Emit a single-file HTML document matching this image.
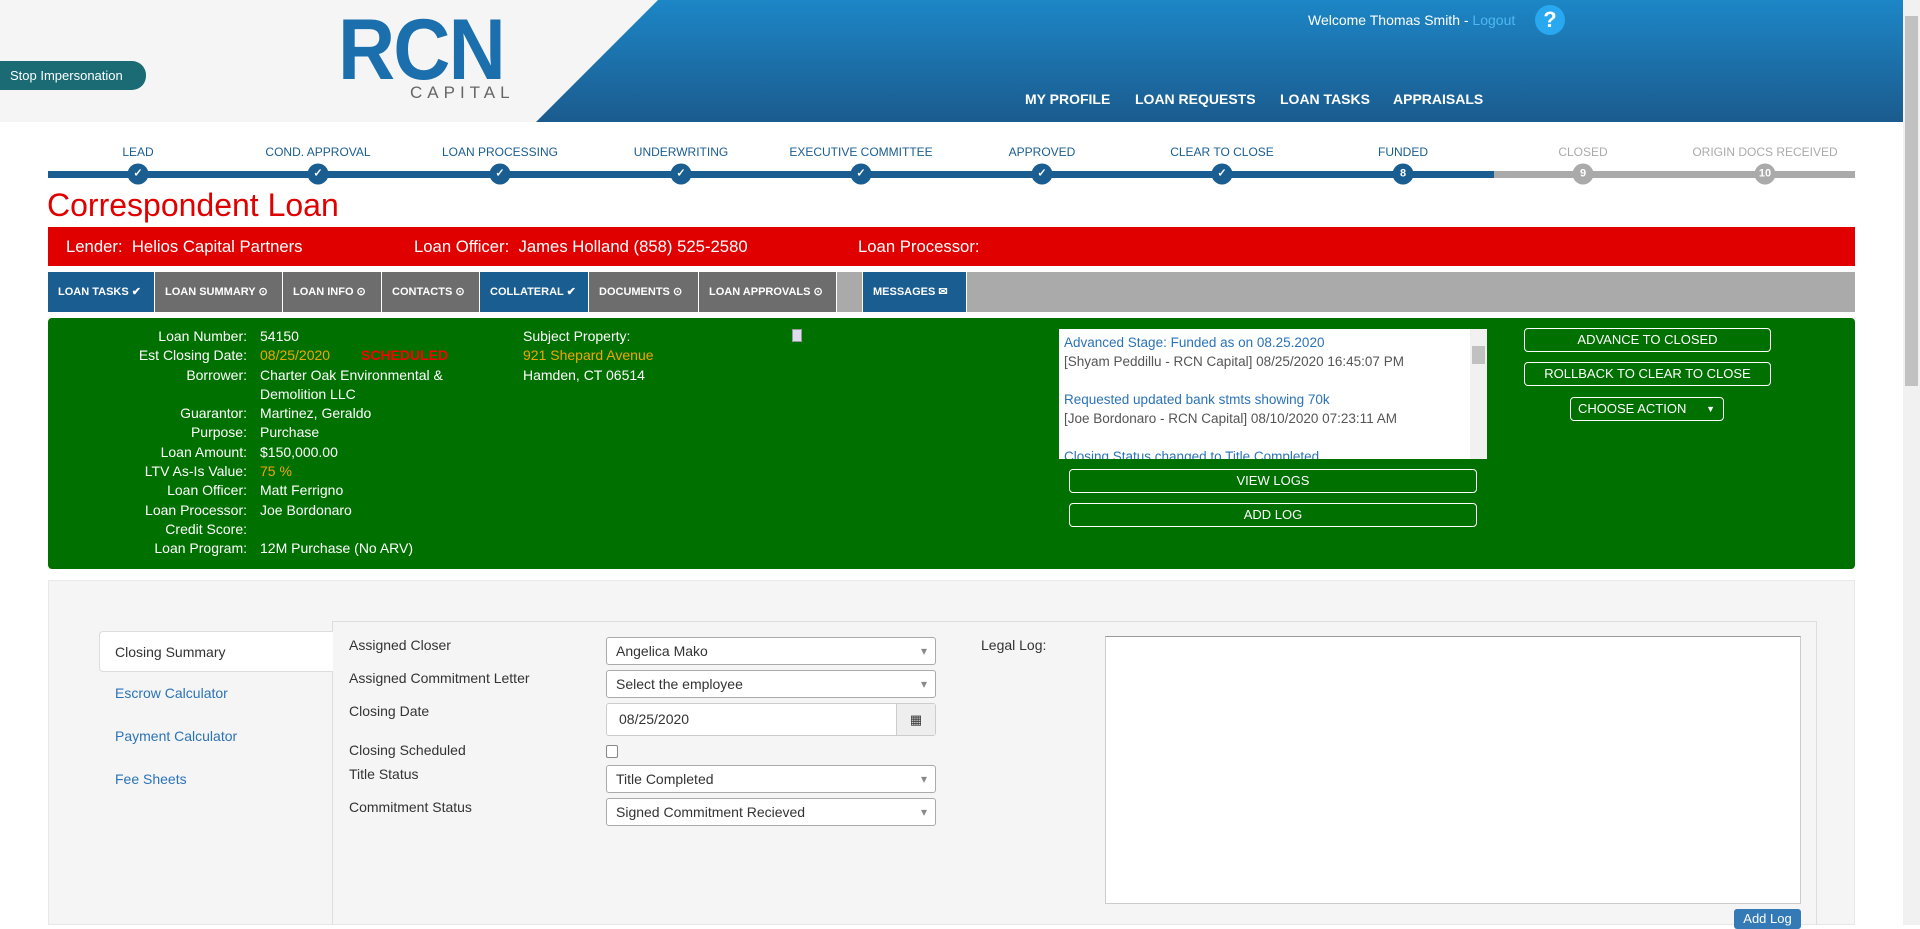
<!DOCTYPE html>
<html><head><meta charset="utf-8">
<style>
*{box-sizing:border-box;margin:0;padding:0}
body{width:1920px;height:925px;overflow:hidden;background:#fff;font-family:"Liberation Sans",Arial,sans-serif;position:relative;color:#333}
.a{position:absolute;white-space:nowrap}
.hdr{position:absolute;left:0;top:0;width:1903px;height:122px;background:#f5f5f5}
.scroll{position:absolute;left:1903px;top:0;width:17px;height:925px;background:#f1f1f1}
.lbl{font-size:12px;color:#1a5d91;text-align:center;transform:translateX(-50%)}
.circ{position:absolute;width:21px;height:21px;border-radius:50%;background:#1a5d91;color:#fff;font-size:11px;font-weight:bold;text-align:center;line-height:21px;transform:translate(-50%,-50%)}
.tab{position:absolute;top:272px;height:40px;color:#fff;font-size:11px;font-weight:bold;line-height:40px;padding-left:10px}
.g{background:#6d6d6d}.b{background:#1a5d91}
.gr{font-size:14px;color:#fff;line-height:19.3px}
.btn{position:absolute;border:1px solid #fff;border-radius:4px;color:#fff;font-size:13px;text-align:center}
.sel{position:absolute;left:606px;width:330px;height:28px;background:#fff;border:1px solid #aaa;border-radius:3px;font-size:14px;line-height:26px;padding-left:9px;color:#333}
.sel:after{content:"▾";position:absolute;right:8px;top:0;color:#888;font-size:12px}
.fl{position:absolute;left:349px;font-size:14px;color:#333}
.nav{position:absolute;top:91px;font-size:14px;font-weight:bold;color:#fff;white-space:nowrap}
</style></head><body>
<div class="hdr"></div>
<svg class="a" style="left:0;top:0" width="1903" height="122"><defs><linearGradient id="bg" x1="0" y1="0" x2="0" y2="1"><stop offset="0" stop-color="#1c86c6"/><stop offset="1" stop-color="#1b5b8e"/></linearGradient></defs><polygon points="658,0 1903,0 1903,122 536,122" fill="url(#bg)"/></svg>
<div class="a" style="left:0;top:61px;width:146px;height:29px;background:#1a6b73;border-radius:0 14px 14px 0;color:#fff;font-size:13px;line-height:29px;padding-left:10px">Stop Impersonation</div>
<div class="a" style="left:338px;top:8px;font-size:86px;font-weight:bold;color:#1c6fad;letter-spacing:-2px;line-height:84px;transform:scaleX(0.92);transform-origin:left">RCN</div>
<div class="a" style="left:410px;top:83px;font-size:17px;color:#666;letter-spacing:5px">CAPITAL</div>
<div class="a" style="left:1308px;top:12px;font-size:14px;color:#fff">Welcome Thomas Smith - <span style="color:#4fb8f0">Logout</span></div>
<div class="a" style="left:1535px;top:5px;width:30px;height:30px;border-radius:50%;background:#29a8f0;color:#fff;font-size:22px;font-weight:bold;text-align:center;line-height:30px">?</div>
<div class="nav" style="left:1025px">MY PROFILE</div>
<div class="nav" style="left:1135px">LOAN REQUESTS</div>
<div class="nav" style="left:1280px">LOAN TASKS</div>
<div class="nav" style="left:1393px">APPRAISALS</div>
<div class="scroll"><div style="position:absolute;left:2px;top:16px;width:13px;height:370px;background:#c1c1c1"></div></div>

<div class="a" style="left:48px;top:171px;width:1446px;height:7px;background:#1a5d91"></div>
<div class="a" style="left:1494px;top:171px;width:361px;height:7px;background:#aaa"></div>
<div class="a lbl" style="left:138px;top:145px">LEAD</div>
<div class="a lbl" style="left:318px;top:145px">COND. APPROVAL</div>
<div class="a lbl" style="left:500px;top:145px">LOAN PROCESSING</div>
<div class="a lbl" style="left:681px;top:145px">UNDERWRITING</div>
<div class="a lbl" style="left:861px;top:145px">EXECUTIVE COMMITTEE</div>
<div class="a lbl" style="left:1042px;top:145px">APPROVED</div>
<div class="a lbl" style="left:1222px;top:145px">CLEAR TO CLOSE</div>
<div class="a lbl" style="left:1403px;top:145px">FUNDED</div>
<div class="a lbl" style="left:1583px;top:145px;color:#aaa">CLOSED</div>
<div class="a lbl" style="left:1765px;top:145px;color:#aaa">ORIGIN DOCS RECEIVED</div>
<div class="circ" style="left:138px;top:174px">✓</div><div class="circ" style="left:318px;top:174px">✓</div><div class="circ" style="left:500px;top:174px">✓</div><div class="circ" style="left:681px;top:174px">✓</div><div class="circ" style="left:861px;top:174px">✓</div><div class="circ" style="left:1042px;top:174px">✓</div><div class="circ" style="left:1222px;top:174px">✓</div><div class="circ" style="left:1403px;top:174px">8</div><div class="circ" style="left:1583px;top:174px;background:#aaa">9</div><div class="circ" style="left:1765px;top:174px;background:#aaa">10</div>

<div class="a" style="left:47px;top:187px;font-size:32px;color:#e00000">Correspondent Loan</div>
<div class="a" style="left:48px;top:227px;width:1807px;height:39px;background:#e00000;color:#fff;font-size:16.7px;line-height:39px">
<span class="a" style="left:18px">Lender:&nbsp; Helios Capital Partners</span><span class="a" style="left:366px">Loan Officer:&nbsp; James Holland (858) 525-2580</span><span class="a" style="left:810px">Loan Processor:</span></div>

<div class="tab b" style="left:48px;width:106px">LOAN TASKS ✔</div>
<div class="tab g" style="left:155px;width:127px">LOAN SUMMARY ⊙</div>
<div class="tab g" style="left:283px;width:98px">LOAN INFO ⊙</div>
<div class="tab g" style="left:382px;width:97px">CONTACTS ⊙</div>
<div class="tab b" style="left:480px;width:108px">COLLATERAL ✔</div>
<div class="tab g" style="left:589px;width:109px">DOCUMENTS ⊙</div>
<div class="tab g" style="left:699px;width:137px">LOAN APPROVALS ⊙</div>
<div class="tab" style="left:837px;width:25px;background:#aaa"></div>
<div class="tab b" style="left:863px;width:103px">MESSAGES ✉</div>
<div class="tab" style="left:967px;width:888px;background:#aaa"></div>

<div class="a" style="left:48px;top:318px;width:1807px;height:251px;background:#007000;border-radius:4px"></div>
<div class="a gr" style="left:60px;top:327px;width:187px;text-align:right">Loan Number:<br>Est Closing Date:<br>Borrower:<br><br>Guarantor:<br>Purpose:<br>Loan Amount:<br>LTV As-Is Value:<br>Loan Officer:<br>Loan Processor:<br>Credit Score:<br>Loan Program:</div>
<div class="a gr" style="left:260px;top:327px">54150<br><span style="color:#f0a500">08/25/2020</span><b style="color:#f00;position:absolute;left:101px">SCHEDULED</b><br>Charter Oak Environmental &amp;<br>Demolition LLC<br>Martinez, Geraldo<br>Purchase<br>$150,000.00<br><span style="color:#f0a500">75 %</span><br>Matt Ferrigno<br>Joe Bordonaro<br><br>12M Purchase (No ARV)</div>
<div class="a gr" style="left:523px;top:327px">Subject Property:<br><span style="color:#f0a500">921 Shepard Avenue</span><br>Hamden, CT 06514</div>
<div class="a" style="left:792px;top:329px;width:10px;height:13px;background:#dde;border:1px solid #999"></div>
<div class="a" style="left:1059px;top:329px;width:428px;height:130px;background:#fff;overflow:hidden;font-size:13.5px;line-height:19px;padding:4px 24px 0 5px">
<div style="color:#2a73b8">Advanced Stage: Funded as on 08.25.2020</div><div style="color:#555">[Shyam Peddillu - RCN Capital] 08/25/2020 16:45:07 PM</div><br>
<div style="color:#2a73b8">Requested updated bank stmts showing 70k</div><div style="color:#555">[Joe Bordonaro - RCN Capital] 08/10/2020 07:23:11 AM</div><br>
<div style="color:#2a73b8">Closing Status changed to Title Completed</div>
<div style="position:absolute;right:0;top:0;width:17px;height:130px;background:#f1f1f1"><div style="position:absolute;left:2px;top:17px;width:13px;height:18px;background:#c1c1c1"></div></div></div>
<div class="btn" style="left:1069px;top:469px;width:408px;height:24px;line-height:22px">VIEW LOGS</div>
<div class="btn" style="left:1069px;top:503px;width:408px;height:24px;line-height:22px">ADD LOG</div>
<div class="btn" style="left:1524px;top:328px;width:247px;height:24px;line-height:22px">ADVANCE TO CLOSED</div>
<div class="btn" style="left:1524px;top:362px;width:247px;height:24px;line-height:22px">ROLLBACK TO CLEAR TO CLOSE</div>
<div class="btn" style="left:1570px;top:397px;width:154px;height:24px;line-height:22px;text-align:left;padding-left:7px">CHOOSE ACTION <span style="position:absolute;right:8px;font-size:9px">▼</span></div>

<div class="a" style="left:48px;top:580px;width:1807px;height:345px;background:#f5f5f5;border:1px solid #e8e8e8"></div>
<div class="a" style="left:332px;top:621px;width:1485px;height:304px;border:1px solid #ddd;border-bottom:none"></div>
<div class="a" style="left:99px;top:631px;width:234px;height:41px;background:#fff;border:1px solid #ddd;border-right:none;border-radius:4px 0 0 4px;font-size:14px;line-height:40px;padding-left:15px;color:#333">Closing Summary</div>
<div class="a" style="left:115px;top:685px;font-size:14px;color:#2a73b8">Escrow Calculator</div>
<div class="a" style="left:115px;top:728px;font-size:14px;color:#2a73b8">Payment Calculator</div>
<div class="a" style="left:115px;top:771px;font-size:14px;color:#2a73b8">Fee Sheets</div>
<div class="fl" style="top:637px">Assigned Closer</div>
<div class="fl" style="top:670px">Assigned Commitment Letter</div>
<div class="fl" style="top:703px">Closing Date</div>
<div class="fl" style="top:742px">Closing Scheduled</div>
<div class="fl" style="top:766px">Title Status</div>
<div class="fl" style="top:799px">Commitment Status</div>
<div class="sel" style="top:637px">Angelica Mako</div>
<div class="sel" style="top:670px">Select the employee</div>
<div class="a" style="left:606px;top:703px;width:330px;height:33px;background:#fff;border:1px solid #ccc;border-radius:3px;font-size:14px;line-height:31px;padding-left:12px">08/25/2020<div style="position:absolute;right:0;top:0;width:39px;height:31px;background:#eee;border-left:1px solid #ccc;text-align:center;font-size:13px">▦</div></div>
<div class="a" style="left:606px;top:745px;width:12px;height:13px;border:1px solid #888;border-radius:2px;background:#fff"></div>
<div class="sel" style="top:765px">Title Completed</div>
<div class="sel" style="top:798px">Signed Commitment Recieved</div>
<div class="a" style="left:981px;top:637px;font-size:14px;color:#333">Legal Log:</div>
<div class="a" style="left:1105px;top:636px;width:696px;height:268px;background:#fff;border:1px solid #ccc;border-top:1px solid #999"></div>
<div class="a" style="left:1734px;top:909px;width:67px;height:20px;background:#337ab7;border-radius:3px;color:#fff;font-size:13px;line-height:20px;text-align:center">Add Log</div>
</body></html>
